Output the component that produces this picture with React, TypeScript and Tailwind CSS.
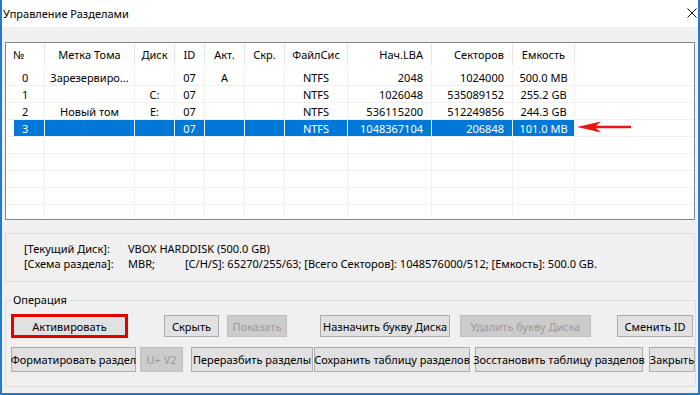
import React from "react";

type Align = "left" | "center" | "right";

interface Column {
  key: string;
  title: string;
  width: number;
  align: Align;
}

interface PartitionRow {
  n: string;
  label: string;
  disk: string;
  id: string;
  act: string;
  hid: string;
  fs: string;
  lba: string;
  sec: string;
  cap: string;
  selected?: boolean;
}

const columns: Column[] = [
  { key: "n", title: "№", width: 31, align: "left" },
  { key: "label", title: "Метка Тома", width: 90, align: "center" },
  { key: "disk", title: "Диск", width: 40, align: "center" },
  { key: "id", title: "ID", width: 30, align: "center" },
  { key: "act", title: "Акт.", width: 40, align: "center" },
  { key: "hid", title: "Скр.", width: 40, align: "center" },
  { key: "fs", title: "ФайлСис", width: 63, align: "center" },
  { key: "lba", title: "Нач.LBA", width: 84, align: "right" },
  { key: "sec", title: "Секторов", width: 81, align: "right" },
  { key: "cap", title: "Емкость", width: 62, align: "center" },
];

const rows: PartitionRow[] = [
  { n: "0", label: "Зарезервиро...", disk: "", id: "07", act: "A", hid: "", fs: "NTFS", lba: "2048", sec: "1024000", cap: "500.0 MB" },
  { n: "1", label: "", disk: "C:", id: "07", act: "", hid: "", fs: "NTFS", lba: "1026048", sec: "535089152", cap: "255.2 GB" },
  { n: "2", label: "Новый том", disk: "E:", id: "07", act: "", hid: "", fs: "NTFS", lba: "536115200", sec: "512249856", cap: "244.3 GB" },
  { n: "3", label: "", disk: "", id: "07", act: "", hid: "", fs: "NTFS", lba: "1048367104", sec: "206848", cap: "101.0 MB", selected: true },
];

// padding per alignment, written out so tailwind picks them up
const alignClass: Record<Align, string> = {
  left: "justify-start pl-[8px]",
  center: "justify-center",
  right: "justify-end pr-[8px]",
};

function Cell({ col, value, selected }: { col: Column; value: string; selected?: boolean }) {
  return (
    <div
      className={`flex h-full shrink-0 items-center whitespace-nowrap border-r border-[#f0f0f0] ${alignClass[col.align]} ${
        selected ? "bg-[#0078d7] text-white" : ""
      }`}
      style={{ width: col.width }}
    >
      {value}
    </div>
  );
}

function PartitionTable() {
  const empty = 5;
  return (
    <div className="relative h-[178px] shrink-0 overflow-hidden border border-[#828790] bg-white">
      {/* header */}
      <div className="flex h-[26px] items-start">
        {columns.map((col, i) => (
          <div
            key={col.key}
            className={`flex h-[22px] shrink-0 items-center whitespace-nowrap border-r border-[#e5e5e5] ${
              col.align === "right" ? "justify-end pr-[8px]" : col.align === "center" ? "justify-center" : "justify-start pl-[7px]"
            }`}
            style={{ width: i === 0 ? col.width + 8 : col.width }}
          >
            {col.title}
          </div>
        ))}
      </div>

      {/* rows */}
      {rows.map((row) => (
        <div key={row.n} className="flex h-[17px] border-b border-[#f0f0f0]">
          <div className="w-[8px] shrink-0" />
          {columns.map((col) => (
            <Cell key={col.key} col={col} value={row[col.key as keyof PartitionRow] as string} selected={row.selected} />
          ))}
        </div>
      ))}
      {Array.from({ length: empty }).map((_, r) => (
        <div key={r} className="flex h-[17px] border-b border-[#f0f0f0]">
          <div className="w-[8px] shrink-0" />
          {columns.map((col) => (
            <Cell key={col.key} col={col} value="" />
          ))}
        </div>
      ))}

      {/* red arrow pointing at the selected partition */}
      <svg className="absolute left-[571px] top-[78px]" width="54" height="12" viewBox="0 0 54 12">
        <path d="M0 6 L24 0.5 L19 4.8 L54 4.8 L54 7.3 L19 7.3 L24 11.5 Z" fill="#e8140f" />
      </svg>
    </div>
  );
}

function Btn({
  children,
  w,
  h = 22,
  disabled,
  highlight,
  className = "",
}: {
  children: React.ReactNode;
  w: number;
  h?: number;
  disabled?: boolean;
  highlight?: boolean;
  className?: string;
}) {
  let look = "border border-[#adadad] bg-[#e1e1e1] text-black";
  if (disabled) look = "border border-[#bfbfbf] bg-[#cccccc] text-[#9a9a9a]";
  if (highlight) look = "border-[3px] border-[#e50000] bg-[#e1e1e1] text-black";
  return (
    <button
      type="button"
      className={`flex shrink-0 items-center justify-center whitespace-nowrap p-0 ${look} ${className}`}
      style={{ width: w, height: h }}
    >
      {children}
    </button>
  );
}

export default function App() {
  return (
    <div className="flex h-[395px] w-[700px] flex-col border-x-2 border-b-2 border-[#2479cc] bg-[#f0f0f0] font-['Noto_Sans',sans-serif] text-[11px] leading-[15px] text-black">
      {/* title bar */}
      <div className="flex h-[27px] shrink-0 items-center justify-between bg-white pl-[1px] pr-[1px]">
        <span className="text-[11px]">Управление Разделами</span>
        <svg width="10" height="10" viewBox="0 0 10 10" className="mb-[1px]">
          <path d="M0.5 0.5 L9.5 9.5 M9.5 0.5 L0.5 9.5" stroke="#111" strokeWidth="1" />
        </svg>
      </div>

      <div className="flex flex-1 flex-col px-[3px] pt-[15px]">
        <PartitionTable />

        {/* disk info */}
        <div className="mt-[13px] h-[49px] shrink-0 border border-[#dcdcdc] pl-[18px] pt-[7px]">
          <div className="flex">
            <span className="w-[104px] shrink-0">[Текущий Диск]:</span>
            <span>VBOX HARDDISK (500.0 GB)</span>
          </div>
          <div className="flex">
            <span className="w-[104px] shrink-0">[Схема раздела]:</span>
            <span className="w-[57px] shrink-0">MBR;</span>
            <span>[C/H/S]: 65270/255/63; [Всего Секторов]: 1048576000/512; [Емкость]: 500.0 GB.</span>
          </div>
        </div>

        {/* operations */}
        <fieldset className="mt-[11px] h-[94px] shrink-0 border border-[#dcdcdc] pl-[5px] pr-0 pt-[7px]">
          <legend className="px-[2px] leading-[14px]">Операция</legend>
          <div className="flex h-[24px] items-center">
            <Btn w={117} h={24} highlight>
              Активировать
            </Btn>
            <Btn w={55} className="ml-[36px]">
              Скрыть
            </Btn>
            <Btn w={60} disabled className="ml-[8px]">
              Показать
            </Btn>
            <Btn w={130} className="ml-[33px]">
              Назначить букву Диска
            </Btn>
            <Btn w={131} disabled className="ml-[10px]">
              Удалить букву Диска
            </Btn>
            <Btn w={76} className="ml-[26px]">
              Сменить ID
            </Btn>
          </div>
          <div className="mt-[9px] flex h-[25px] items-center">
            <Btn w={125} h={25}>
              Форматировать раздел
            </Btn>
            <Btn w={43} h={25} disabled className="ml-[4px]">
              U+ V2
            </Btn>
            <Btn w={122} h={25} className="ml-[8px]">
              Переразбить разделы
            </Btn>
            <Btn w={156} h={25} className="ml-[1px]">
              Сохранить таблицу разделов
            </Btn>
            <Btn w={168} h={25} className="ml-[5px]">
              Зосстановить таблицу разделов
            </Btn>
            <Btn w={46} h={25} className="ml-[6px]">
              Закрыть
            </Btn>
          </div>
        </fieldset>
      </div>
    </div>
  );
}
